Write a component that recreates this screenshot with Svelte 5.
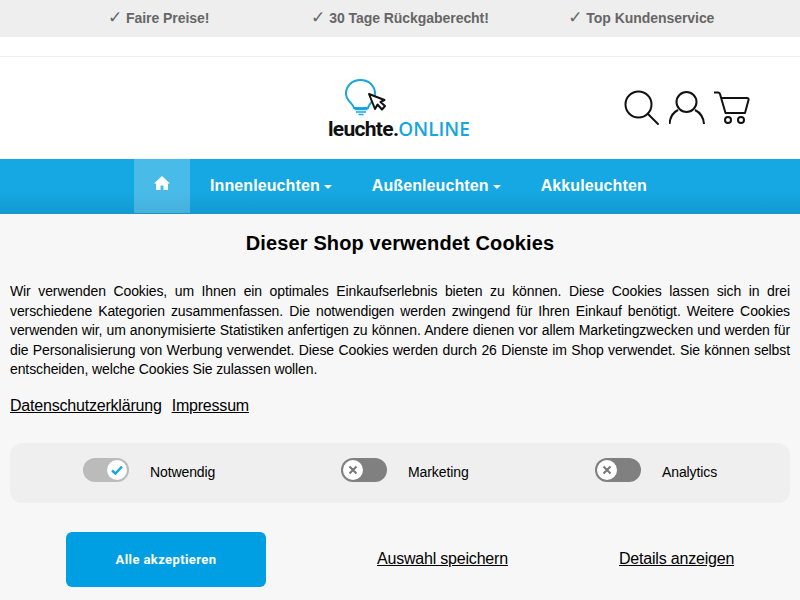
<script>
  const usps = ['Faire Preise!', '30 Tage Rückgaberecht!', 'Top Kundenservice'];
  const navItems = [
    { label: 'Innenleuchten', caret: true },
    { label: 'Außenleuchten', caret: true },
    { label: 'Akkuleuchten', caret: false }
  ];
  const toggles = [
    { label: 'Notwendig', on: true },
    { label: 'Marketing', on: false },
    { label: 'Analytics', on: false }
  ];
</script>

<div class="page">
  <div class="usp-bar">
    {#each usps as usp}
      <div class="usp"><span class="tick">✓</span> {usp}</div>
    {/each}
  </div>

  <header class="header">
    <a class="logo" href="#top">
      <svg class="bulb" width="44" height="38" viewBox="0 0 44 38">
        <path d="M10 30C9 25 2 23 2 15.500C2 8 8 2 16.500 2C25 2 31 8 31 15.500C31 23 25 25 24 30Z" fill="#fff" stroke="#16a6e0" stroke-width="2"/>
        <path d="M10.500 31.500H23.500M12 34H22M14.500 36.500H19.500" stroke="#16a6e0" stroke-width="1.500"/>
        <path d="M25 16L31 31L33.500 26.500L38 31.500L41 28L36.500 24L40.500 22Z" fill="#fff" stroke="#111" stroke-width="2" stroke-linejoin="round"/>
      </svg>
      <span class="wordmark">leuchte.<span class="online">ONLINE</span></span>
    </a>
    <div class="header-icons">
      <svg width="36" height="36" viewBox="0 0 36 36" fill="none" stroke="#111" stroke-width="2">
        <circle cx="14.500" cy="14.500" r="13"/>
        <path d="M24 24L34 34" stroke-linecap="round"/>
      </svg>
      <svg width="36" height="36" viewBox="0 0 36 36" fill="none" stroke="#111" stroke-width="2">
        <circle cx="17.500" cy="12" r="10"/>
        <path d="M0.500 34C1 27 4 22.500 9 20M35 34C34.500 27 31 22.500 26 20"/>
      </svg>
      <svg width="36" height="36" viewBox="0 0 36 36" fill="none" stroke="#111" stroke-width="2">
        <path d="M0 2.500H4C5 2.500 5.500 3 6 4L11.500 23H31L34.500 10C35 8.500 34 8 33 8H8" stroke-linejoin="round"/>
        <circle cx="14" cy="30" r="3"/>
        <circle cx="27" cy="30" r="3"/>
      </svg>
    </div>
  </header>

  <nav class="nav">
    <a class="home" href="#top" aria-label="Startseite">
      <svg width="16" height="14" viewBox="0 0 16 14"><path d="M8 0L16 7.500H14V14H9.500V9.500H6.500V14H2V7.500H0Z" fill="#fff"/></svg>
    </a>
    {#each navItems as item}
      <a class="nav-link" href="#top">{item.label}{#if item.caret}<span class="caret"></span>{/if}</a>
    {/each}
  </nav>

  <section class="cookies">
    <h2>Dieser Shop verwendet Cookies</h2>
    <p>Wir verwenden Cookies, um Ihnen ein optimales Einkaufserlebnis bieten zu können. Diese Cookies lassen sich in drei verschiedene Kategorien zusammenfassen. Die notwendigen werden zwingend für Ihren Einkauf benötigt. Weitere Cookies verwenden wir, um anonymisierte Statistiken anfertigen zu können. Andere dienen vor allem Marketingzwecken und werden für die Personalisierung von Werbung verwendet. Diese Cookies werden durch 26 Dienste im Shop verwendet. Sie können selbst entscheiden, welche Cookies Sie zulassen wollen.</p>
    <div class="legal">
      <a href="#top">Datenschutzerklärung</a>
      <a href="#top">Impressum</a>
    </div>
    <div class="toggles">
      {#each toggles as toggle}
        <div class="toggle-item">
          <span class="switch" class:on={toggle.on}>
            <span class="knob">
              {#if toggle.on}
                <svg width="14" height="14" viewBox="0 0 14 14" fill="none" stroke="#16a6e0" stroke-width="2.400"><path d="M2 7.500L5.500 10.500L12 3.500"/></svg>
              {:else}
                <svg width="10" height="10" viewBox="0 0 10 10" fill="none" stroke="#777" stroke-width="2"><path d="M1.500 1.500L8.500 8.500M8.500 1.500L1.500 8.500"/></svg>
              {/if}
            </span>
          </span>
          <span class="toggle-label">{toggle.label}</span>
        </div>
      {/each}
    </div>
    <div class="actions">
      <button class="accept">Alle akzeptieren</button>
      <a class="action-link save" href="#top">Auswahl speichern</a>
      <a class="action-link details" href="#top">Details anzeigen</a>
    </div>
  </section>
</div>

<style>
  :global(body) {
    margin: 0;
    font-family: "Liberation Sans", Arial, sans-serif;
    color: #000;
    background: #fff;
  }

  .page {
    height: 600px;
    overflow: hidden;
  }

  a {
    color: inherit;
  }

  .usp-bar {
    height: 37px;
    padding: 0 38px 3px;
    box-sizing: border-box;
    background: #eee;
    display: grid;
    grid-template-columns: repeat(3, 1fr);
    align-items: center;
    text-align: center;
    font-size: 14px;
    font-weight: bold;
    letter-spacing: -0.05px;
    color: #666;
    margin-bottom: 19px;
  }

  .tick {
    font-family: "DejaVu Sans", sans-serif;
    font-size: 17px;
    line-height: 1;
  }

  .header {
    height: 102px;
    border-top: 1px solid #eee;
    position: relative;
    display: flex;
    justify-content: flex-end;
    align-items: center;
    padding-right: 50px;
  }

  .logo {
    position: absolute;
    left: 328px;
    top: 21px;
    width: 146px;
    text-decoration: none;
  }

  .bulb {
    display: block;
    margin-left: 16px;
  }

  .wordmark {
    display: block;
    margin-top: 2px;
    font-family: Roboto, sans-serif;
    font-size: 21px;
    line-height: 22px;
    font-weight: 700;
    letter-spacing: -0.7px;
    color: #111;
    white-space: nowrap;
  }

  .online {
    font-family: "Open Sans", sans-serif;
    font-weight: 600;
    font-size: 19px;
    letter-spacing: 0;
    color: #16a6e0;
  }

  .header-icons {
    display: flex;
    gap: 9px;
  }

  .header-icons svg {
    display: block;
  }

  .nav {
    height: 55px;
    padding-left: 134px;
    background: linear-gradient(#16a8e3 0, #16a8e3 60%, #1299d0 100%);
    display: flex;
    color: #fff;
    font-size: 16px;
    font-weight: bold;
    letter-spacing: 0.1px;
  }

  .home {
    width: 56px;
    height: 54px;
    background: rgba(255, 255, 255, 0.22);
    display: flex;
    justify-content: center;
    padding-top: 17px;
    box-sizing: border-box;
  }

  .nav-link {
    display: block;
    padding: 18px 20px 0;
    text-decoration: none;
    line-height: 18px;
  }

  .caret {
    display: inline-block;
    margin-left: 4px;
    vertical-align: 2px;
    border-top: 4px solid #fff;
    border-left: 4px solid transparent;
    border-right: 4px solid transparent;
  }

  .cookies {
    height: 386px;
    padding: 18px 10px 0;
    box-sizing: border-box;
    background: #f7f7f7;
  }

  h2 {
    margin: 0;
    font-size: 20px;
    line-height: 23px;
    letter-spacing: 0.14px;
    text-align: center;
  }

  p {
    margin: 27px 0 0;
    font-size: 14px;
    line-height: 19.6px;
    letter-spacing: -0.1px;
    text-align: justify;
  }

  .legal {
    margin-top: 16px;
    display: flex;
    gap: 10px;
    font-size: 16px;
    line-height: 20px;
    letter-spacing: -0.2px;
  }

  .toggles {
    margin-top: 27px;
    height: 60px;
    border-radius: 12px;
    background: #efefef;
    position: relative;
    font-size: 14px;
    letter-spacing: -0.1px;
  }

  .toggle-item {
    position: absolute;
    top: 15px;
    display: flex;
    gap: 21px;
  }

  .toggle-item:nth-child(1) { left: 73px; }
  .toggle-item:nth-child(2) { left: 331px; }
  .toggle-item:nth-child(3) { left: 585px; }

  .switch {
    width: 46px;
    height: 24px;
    border-radius: 12px;
    background: #808080;
    display: flex;
    align-items: center;
    padding: 0 2px;
    box-sizing: border-box;
  }

  .switch.on {
    background: #bbb;
    justify-content: flex-end;
  }

  .knob {
    width: 20px;
    height: 20px;
    border-radius: 50%;
    background: #fff;
    display: flex;
    align-items: center;
    justify-content: center;
  }

  .toggle-label {
    line-height: 20px;
    padding-top: 4px;
  }

  .actions {
    position: relative;
    margin-top: 29px;
    height: 55px;
    font-size: 16px;
    letter-spacing: -0.2px;
  }

  .accept {
    position: absolute;
    left: 56px;
    top: 0;
    width: 200px;
    height: 55px;
    border: none;
    border-radius: 6px;
    background: #009fe3;
    color: #fff;
    font: bold 13px "Roboto", "Liberation Sans", sans-serif;
    letter-spacing: 0.4px;
  }

  .action-link {
    position: absolute;
    top: 17px;
    line-height: 20px;
  }

  .save { left: 367px; }
  .details { left: 609px; }
</style>
